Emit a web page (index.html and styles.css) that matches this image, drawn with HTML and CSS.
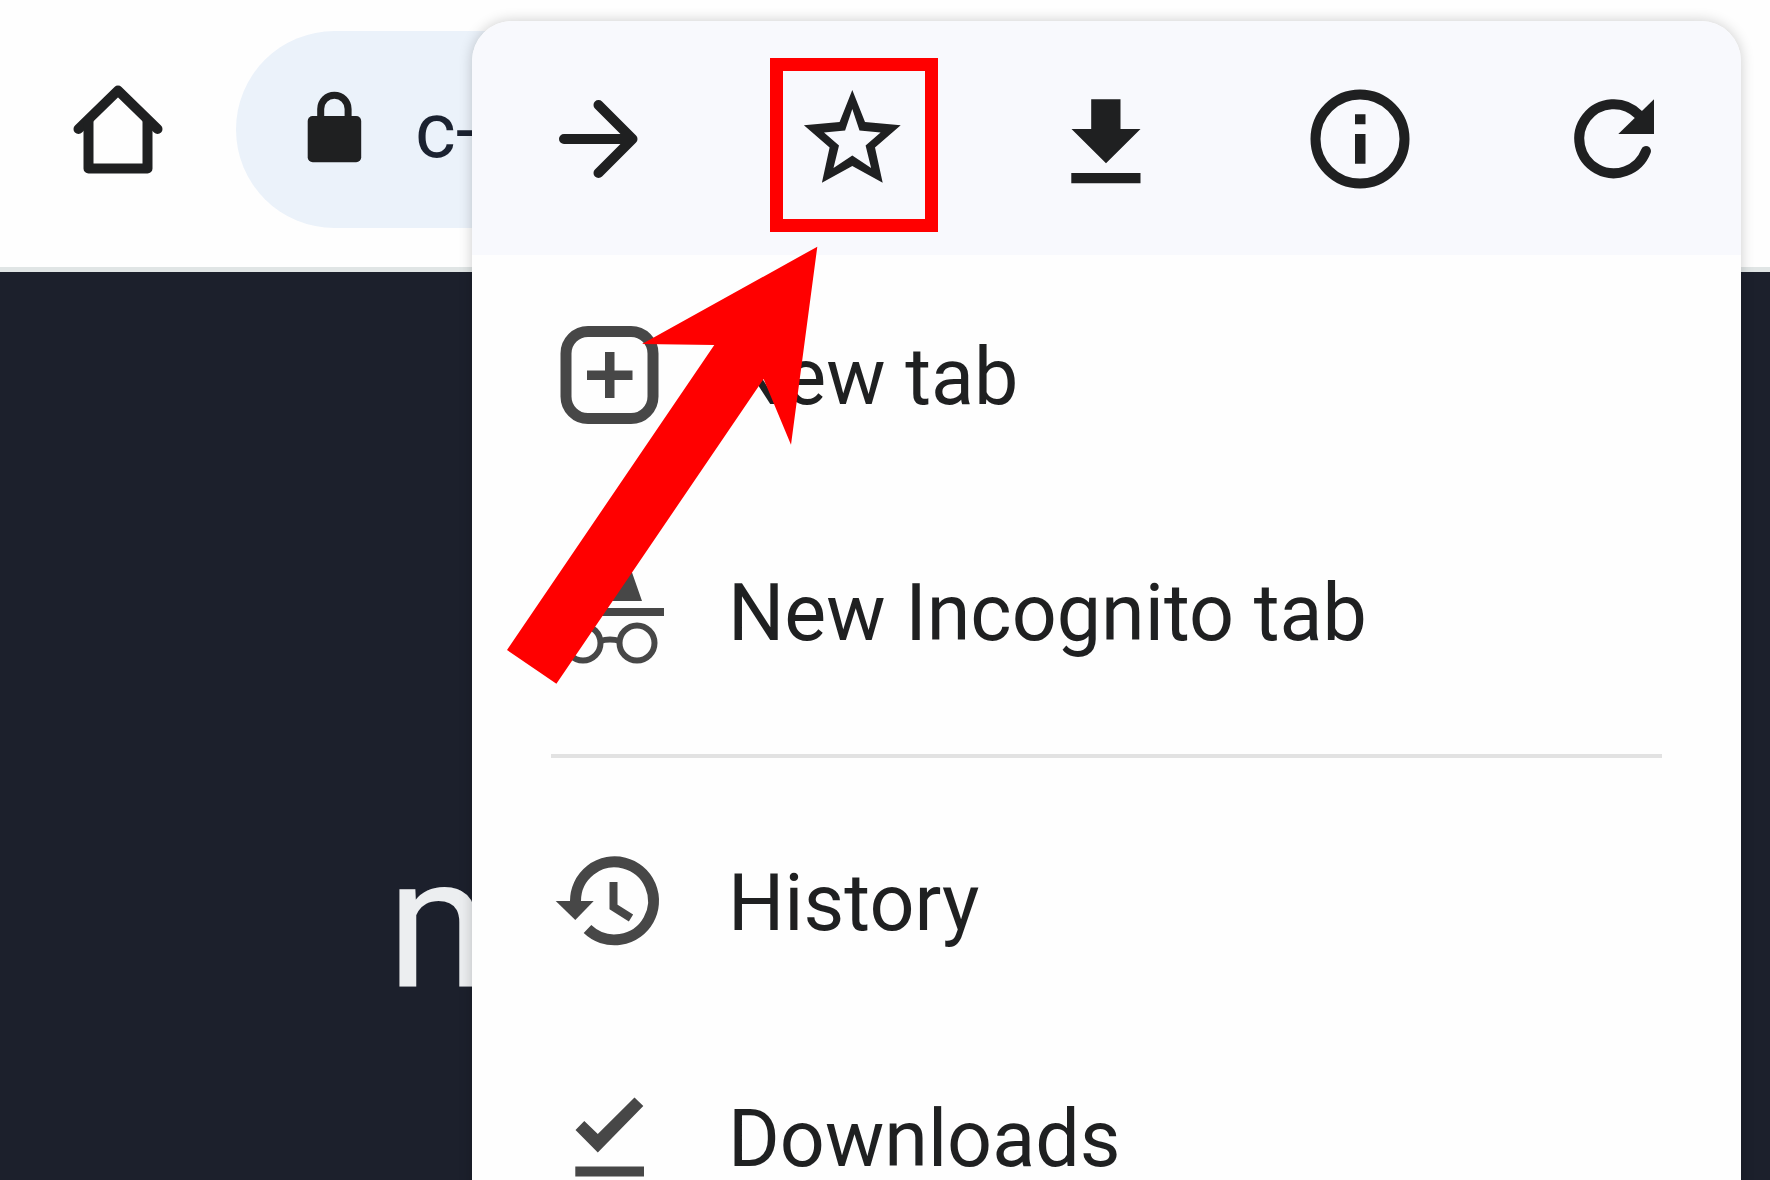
FILE: index.html
```html
<!DOCTYPE html>
<html lang="en">
<head>
<meta charset="utf-8">
<title>Browser menu</title>
<link rel="stylesheet" href="styles.css">
</head>
<body>
<div class="browser">
  <header class="toolbar">
    <button class="home" aria-label="Home">
      <svg class="icon" viewBox="0 0 120 120" fill="none" stroke="currentColor" stroke-width="10" stroke-linecap="round" stroke-linejoin="round"><path d="M20.500 59 60 20.500 99.500 59"/><path stroke-linecap="butt" d="M30.500 51V98.500H89.500V51"/></svg>
    </button>
    <div class="address">
      <svg class="lock" viewBox="0 0 60 120" aria-hidden="true"><rect x="3.700" y="46" width="53.500" height="46.300" rx="5" fill="currentColor"/><path d="M16.700 48V39a13.700 13.700 0 0 1 27.400 0V48" fill="none" stroke="currentColor" stroke-width="7"/></svg>
      <input class="url" type="text" value="c-" aria-label="Address">
    </div>
  </header>
  <main class="page">
    <p class="page-text">m</p>
  </main>

  <div class="menu">
    <div class="actions">
      <button class="action" aria-label="Forward">
        <svg class="icon" viewBox="0 0 120 120" fill="none" stroke="currentColor" stroke-width="10" stroke-linecap="round" stroke-linejoin="round"><path d="M25 61H93M59.500 27 93.500 61 59.500 95"/></svg>
      </button>
      <button class="action" aria-label="Bookmark">
        <svg class="icon" viewBox="0 0 120 120" fill="currentColor" fill-rule="evenodd"><path d="M59.300 12 72 44 107.700 47.300 82 69.500 89.700 104.700 59.300 88 28.900 104.700 36.600 69.500 10.900 47.300 46.600 44ZM59.300 31 52.100 52.500 31 54.500 46 67.500 40.500 90 59.300 77.500 78.100 90 72.600 67.500 87.600 54.500 66.500 52.500Z"/></svg>
        <span class="highlight"></span>
      </button>
      <button class="action" aria-label="Download page">
        <svg class="icon" viewBox="0 0 120 120" fill="currentColor"><path d="M45.200 21.300H74.500V51H94.500L60 85.300 25.500 51H45.200ZM25.300 95H94.500V105.300H25.300Z"/></svg>
      </button>
      <button class="action" aria-label="Page info">
        <svg class="icon" viewBox="0 0 120 120" fill="currentColor"><circle cx="60" cy="61" r="44.500" fill="none" stroke="currentColor" stroke-width="10"/><path d="M55 36.300H65.500V46.300H55ZM55 56H65.500V85.700H55Z"/></svg>
      </button>
      <button class="action" aria-label="Reload">
        <svg class="icon" viewBox="0 0 120 120" fill="currentColor"><path d="M92 73A34.500 34.500 0 1 1 84.400 36.600" fill="none" stroke="currentColor" stroke-width="10" stroke-linecap="round"/><path d="M100 21.300V56H64.300Z"/></svg>
      </button>
    </div>

    <nav class="items">
      <a class="item" href="#new-tab">
        <svg class="icon" viewBox="0 0 120 120" fill="currentColor"><rect x="17" y="14.500" width="87" height="87" rx="22" fill="none" stroke="currentColor" stroke-width="11"/><path d="M56 35H65.500V53.500H83.500V63H65.500V81H56V63H38V53.500H56Z"/></svg>
        <span>New tab</span>
      </a>
      <a class="item" href="#incognito">
        <svg class="icon" viewBox="0 0 120 120" fill="currentColor"><path d="M28 48 41 8Q51 4 60 9 69 4 79 8L93 48ZM6 55H115V63H6Z"/><g fill="none" stroke="currentColor" stroke-width="6"><circle cx="34" cy="90" r="17.500"/><circle cx="88" cy="90" r="17.500"/><path d="M51 88Q61 85 71 88"/></g></svg>
        <span>New Incognito tab</span>
      </a>
      <hr class="divider">
      <a class="item" href="#history">
        <svg class="icon" viewBox="0 0 120 120" fill="none" stroke="currentColor"><path d="M26.500 60V58A39 39 0 1 1 38.500 86" stroke-width="11"/><path d="M64.500 39V64L82 75" stroke-width="8"/><path d="M6.700 58H44.700L26.300 77Z" fill="currentColor" stroke="none"/></svg>
        <span>History</span>
      </a>
      <a class="item" href="#downloads">
        <svg class="icon" viewBox="0 0 120 120" fill="currentColor"><path d="M26.500 51 35.300 42 48.800 55 85.500 18.500 94.300 27 48.800 73.500ZM26.300 87.500H95V97.500H26.300Z"/></svg>
        <span>Downloads</span>
      </a>
    </nav>

    <svg class="pointer" viewBox="0 0 330 450" aria-hidden="true"><path fill="#f00" d="M317.300 6.700 142 104 214.300 105 7 410 56.400 443.700 263.600 139 291 204.700Z"/></svg>
  </div>
</div>
</body>
</html>
```

FILE: styles.css
```css
* {
  box-sizing: border-box;
}

body {
  margin: 0;
  font-family: Roboto, "Liberation Sans", sans-serif;
  color: #1f2021;
}

button {
  padding: 0;
  border: 0;
  background: none;
  color: inherit;
}

.browser {
  position: relative;
  display: flex;
  flex-direction: column;
  height: 100vh;
  overflow: hidden;
  background: #fefefe;
}

.icon {
  display: block;
  flex: none;
  width: 120px;
  height: 120px;
}

.toolbar {
  display: flex;
  align-items: center;
  gap: 58px;
  padding: 31px 120px 39px 58px;
  border-bottom: 5px solid #e0e5e5;
}

.address {
  display: flex;
  flex: 1;
  align-items: center;
  gap: 51px;
  height: 197px;
  padding-left: 68px;
  border-radius: 99px;
  background: #ebf2fa;
}

.lock {
  flex: none;
  width: 60px;
  height: 120px;
}

.url {
  flex: 1;
  min-width: 0;
  height: 120px;
  padding: 2px 0 0;
  border: 0;
  background: none;
  color: #1b2230;
  font: inherit;
  font-size: 78px;
}

.page {
  flex: 1;
  padding: 558px 0 0 387px;
  background: #1c202c;
}

.page-text {
  margin: 0;
  color: #eceef0;
  font-size: 184px;
  line-height: 186px;
}

.menu {
  position: absolute;
  top: 21px;
  right: 29px;
  left: 472px;
  border-radius: 40px 40px 0 0;
  background: #fefefe;
  box-shadow: 0 0 14px rgba(0, 0, 0, 0.2);
}

.actions {
  display: grid;
  grid-template-columns: repeat(5, 1fr);
  height: 234px;
  border-radius: 40px 40px 0 0;
  background: #f8f9fd;
}

.action {
  position: relative;
  display: flex;
  align-items: center;
  justify-content: center;
}

.highlight {
  position: absolute;
  top: 37px;
  left: calc(50% - 83px);
  width: 168px;
  height: 174px;
  border: 13px solid #f00;
}

.items {
  padding-top: 4px;
}

.item {
  display: flex;
  align-items: center;
  gap: 59px;
  height: 236px;
  padding-left: 77px;
  color: #474747;
  font-size: 79px;
  line-height: 96px;
  text-decoration: none;
  white-space: nowrap;
}

.item span {
  color: #1f2021;
}

.divider {
  height: 4px;
  margin: 23px 79px 27px;
  border: 0;
  background: #e2e2e2;
}

.pointer {
  position: absolute;
  top: 219px;
  left: 28px;
  width: 330px;
  height: 450px;
}
```
